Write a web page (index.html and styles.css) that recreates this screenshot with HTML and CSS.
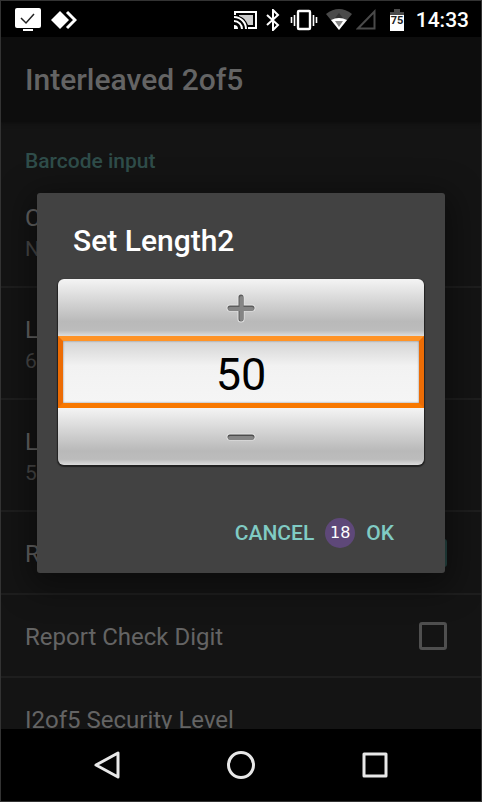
FILE: index.html
```html
<!DOCTYPE html>
<html lang="en">
<head>
<meta charset="utf-8">
<title>Interleaved 2of5</title>
<link rel="stylesheet" href="styles.css">
</head>
<body>
<div class="device">
  <header class="status">
    <svg width="26" height="24" viewBox="0 0 26 24"><rect width="26" height="20" rx="2" fill="#fff"/><path d="M6 10l5 5 8-9" fill="none" stroke="#222" stroke-width="1.5"/><path d="M8 22h10" stroke="#fff" stroke-width="2"/></svg>
    <svg class="anydesk" width="26" height="20" viewBox="0 0 26 20"><path d="M9 1l9 9-9 9-9-9z" fill="#fff"/><path d="M16 2l8 8-8 8" fill="none" stroke="#fff" stroke-width="3"/></svg>
    <svg class="cast" width="24" height="20" viewBox="0 0 24 20"><path d="M1 5V2h21v16h-8" fill="none" stroke="#fff" stroke-width="2"/><path d="M5 5h14v10h-5C12 10 9 7 5 6z" fill="#ccc"/><path d="M0 7a12 12 0 0 1 12 12M0 11a8 8 0 0 1 8 8" fill="none" stroke="#fff" stroke-width="2"/><path d="M0 15a4 4 0 0 1 4 4H0z" fill="#fff"/></svg>
    <svg class="bt" width="14" height="22" viewBox="0 0 14 22"><path d="M1 6l11 10-5 5V1l5 5L1 16" fill="none" stroke="#fff" stroke-width="2"/></svg>
    <svg class="vibe" width="28" height="22" viewBox="0 0 28 22"><rect x="8" y="2" width="12" height="18" rx="1" fill="none" stroke="#fff" stroke-width="2.400"/><path d="M4.500 6v11M1.500 8v6M23.500 6v11M26.500 8v6" stroke="#fff" stroke-width="1.600"/></svg>
    <svg class="wifi" width="26" height="21" viewBox="0 0 26 21"><path d="M0 5Q13-5 26 5L13 21z" fill="#4a4a4a"/><path d="M5 11Q13 7 21 11L13 21z" fill="#fff"/><path d="M9 9h8l-4-5z" fill="#333"/><path d="M9 12h8l-4 6z" fill="#888"/></svg>
    <svg class="signal" width="20" height="21" viewBox="0 0 20 21"><path d="M18.500 2.500v17H2z" fill="none" stroke="#4a4a4a" stroke-width="2"/></svg>
    <svg class="battery" width="14" height="22" viewBox="0 0 14 22"><path d="M0 6V3h4V0h6v3h4v3z" fill="#4a4a4a"/><path d="M0 6h14v16H0z" fill="#fff"/><text x="7" y="15" text-anchor="middle" font-family="Roboto" font-weight="700" font-size="11" fill="#222">75</text></svg>
    <time class="clock">14:33</time>
  </header>
  <main class="screen">
    <div class="appbar"><h1>Interleaved 2of5</h1></div>
    <section class="settings">
      <h2>Barcode input</h2>
      <div class="row double"><span>C</span><small>N</small></div>
      <div class="row double"><span>L</span><small>6</small></div>
      <div class="row double"><span>L</span><small>5</small></div>
      <div class="row"><label for="redundancy">R</label><input class="check" id="redundancy" type="checkbox" checked></div>
      <div class="row"><label for="report">Report Check Digit</label><input class="check" id="report" type="checkbox"></div>
      <div class="row"><span>I2of5 Security Level</span></div>
    </section>
    <div class="overlay">
      <form class="dialog" role="dialog" aria-labelledby="dialog-title">
        <label class="title" id="dialog-title" for="length">Set Length2</label>
        <div class="picker">
          <button class="step" type="button" aria-label="Increase"><svg width="30" height="30" viewBox="0 0 30 30"><path d="M4 15h22M15 4v22" stroke="#e4e4e4" stroke-width="7" stroke-linecap="round"/><path d="M4 15h22M15 4v22" stroke="#5c5c5c" stroke-width="5" stroke-linecap="round"/><path d="M4 16h22M15.500 5v21" stroke="#858585" stroke-width="4" stroke-linecap="round"/></svg></button>
          <input class="value" id="length" type="text" value="50">
          <button class="step" type="button" aria-label="Decrease"><svg width="30" height="30" viewBox="0 0 30 30"><path d="M4 15h22" stroke="#e4e4e4" stroke-width="7" stroke-linecap="round"/><path d="M4 15h22" stroke="#4c4c4c" stroke-width="5" stroke-linecap="round"/><path d="M4 16h22" stroke="#858585" stroke-width="4" stroke-linecap="round"/></svg></button>
        </div>
        <div class="actions">
          <button type="button">CANCEL</button>
          <span class="badge">18</span>
          <button type="button">OK</button>
        </div>
      </form>
    </div>
  </main>
  <nav class="navbar">
    <button type="button" aria-label="Back"><svg width="30" height="30" viewBox="0 0 30 30"><path d="M26 3v24L4 15z" fill="none" stroke="#e8e8e8" stroke-width="3" stroke-linejoin="round"/></svg></button>
    <button type="button" aria-label="Home"><svg width="30" height="30" viewBox="0 0 30 30"><circle cx="15" cy="15" r="12.500" fill="none" stroke="#e8e8e8" stroke-width="3"/></svg></button>
    <button type="button" aria-label="Recent apps"><svg width="30" height="30" viewBox="0 0 30 30"><rect x="4" y="4" width="22" height="22" fill="none" stroke="#e8e8e8" stroke-width="3" stroke-linejoin="round"/></svg></button>
  </nav>
</div>
</body>
</html>
```
FILE: styles.css
```css
* { box-sizing: border-box; }
body { margin: 0; background: #000; font-family: Roboto, sans-serif; }
button { margin: 0; padding: 0; border: 0; background: none; font: inherit; color: inherit; }
svg { display: block; flex: none; }
.device { display: flex; flex-direction: column; height: 100vh; border: 1px solid #333; background: #000; }

.status { display: flex; align-items: center; flex: none; height: 36px; padding: 1px 12px 0 14px; }
.anydesk { margin-left: 10px; }
.cast { margin-left: auto; }
.bt { margin-left: 8px; }
.vibe { margin-left: 10px; }
.wifi { margin-left: 8px; }
.signal { margin-left: 4px; }
.battery { margin-left: 14px; }
.clock { margin-left: 12px; color: #fff; font-size: 21px; font-weight: 500; line-height: 36px; }

.screen { position: relative; flex: 1; min-height: 0; overflow: hidden; background: #141414; color: #646464; }
.appbar { display: flex; align-items: center; height: 85px; padding: 0 24px; background: #0d0d0d; box-shadow: 0 1px 4px #0d0d0d; }
.appbar h1 { margin: 0; font-size: 30px; font-weight: 500; line-height: 36px; }
.settings h2 { margin: 0; padding: 25px 24px 1px; color: #2f4d4a; font-size: 21px; font-weight: 500; line-height: 28px; }
.row { display: flex; align-items: center; justify-content: space-between; height: 83px; padding: 0 34px 0 24px; border-bottom: 2px solid #1e1e1e; font-size: 24px; line-height: 32px; }
.row span, .row label { padding-top: 2px; }
.row.double { flex-direction: column; align-items: flex-start; justify-content: center; height: 112px; padding-top: 2px; }
.row small { color: #484848; font-size: 21px; line-height: 30px; }
.check { appearance: none; width: 28px; height: 28px; margin: 0; border: 3px solid #4f4f4f; border-radius: 3px; }
.check:checked { border-color: #264744; background: #264744; }

.overlay { position: absolute; inset: 0; display: flex; align-items: center; padding: 0 36px; }
.dialog { flex: 1; padding: 30px 21px 14px; border-radius: 3px; background: #424242; box-shadow: 0 8px 32px 8px rgba(0, 0, 0, .4); }
.title { display: block; padding: 0 15px; color: #fff; font-size: 30px; font-weight: 500; line-height: 36px; }
.picker { display: flex; flex-direction: column; margin-top: 20px; border-radius: 6px; overflow: hidden; box-shadow: 0 1px 1px 1px #222; }
.step { display: flex; align-items: center; justify-content: center; height: 57px; background: linear-gradient(#f4f4f4, #b9b9b9 75%, #bcbcbc 90%, #ddd); }
.value { width: 100%; height: 72px; margin: 0; padding: 4px 0 0; border: 5px solid; border-color: #ff9326 #ec6c05 #f87800; border-radius: 0; outline: 0; background: linear-gradient(#d4d4d4, #f2f2f2 40%, #f5f5f5); box-shadow: inset 0 0 2px #777; color: #000; font: 400 45px Roboto, sans-serif; text-align: center; }
.actions { display: flex; align-items: center; justify-content: flex-end; gap: 11px; height: 52px; margin-top: 42px; padding-right: 30px; color: #80cbc4; font-size: 21px; font-weight: 500; line-height: 28px; }
.badge { width: 30px; border-radius: 50%; background: #5e4879; color: #fff; font: 16px/30px "DejaVu Sans", sans-serif; text-align: center; }

.navbar { display: flex; align-items: center; justify-content: center; flex: none; gap: 104px; height: 72px; }
```
